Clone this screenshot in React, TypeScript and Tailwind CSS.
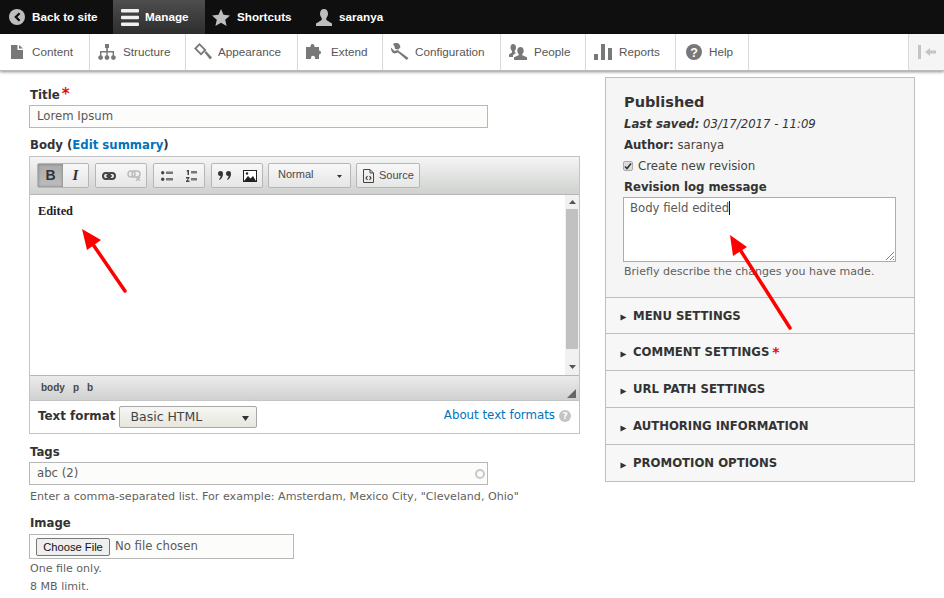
import React from "react";

const G = "#787878";
function Ic({ children, w = 18, h = 18, className = "" }: { children: React.ReactNode; w?: number; h?: number; className?: string }) {
  return <svg width={w} height={h} viewBox={`0 0 ${w} ${h}`} className={`shrink-0 ${className}`}>{children}</svg>;
}

const tray: { label: string; w: string; gap: string; icon: React.ReactNode }[] = [
  { label: "Content", w: "w-[90px]", gap: "pl-[11px] gap-[9px]", icon: <Ic w={12} h={14}><path d="M0 0h6.5v5h5.5v9H0z M8 0l4 3.6H8z" fill={G} /></Ic> },
  { label: "Structure", w: "w-[96px]", gap: "pl-[8px] gap-[7px]", icon: <Ic w={18} h={16}><path d="M7 0h4v4H9.8v3H16v5h-1.4V8.4H9.7V12H8.3V8.4H3.4V12H2V7h6.2V4H7z" fill={G} /><circle cx="2.6" cy="13.6" r="2.4" fill={G} /><circle cx="9" cy="13.6" r="2.4" fill={G} /><circle cx="15.4" cy="13.6" r="2.4" fill={G} /></Ic> },
  { label: "Appearance", w: "w-[112px]", gap: "pl-[8px] gap-[6px]", icon: <Ic w={18} h={17}><path d="M0 5.500L5.500 0l7 7L7 12.500z M2.600 5.500L5.500 2.600l4.400 4.400L7 9.900z" fill={G} fillRule="evenodd" /><path d="M10.500 9.500l1.500-1.500 6 6.500-2 2z" fill={G} /></Ic> },
  { label: "Extend", w: "w-[85px]", gap: "pl-[8px] gap-[7px]", icon: <Ic w={18} h={16}><path d="M0 3h4.500V2a2 2 0 0 1 4 0v1H13v3.500a2 2 0 1 1 0 4V15H9v-1.200a2 2 0 0 0-4 0V15H0z" fill={G} /></Ic> },
  { label: "Configuration", w: "w-[118px]", gap: "pl-[8px] gap-[6px]", icon: <Ic w={18} h={17}><path d="M0 4.500L3.500 8l3-1L17.500 15l-1.800 2L7 9.500 3.500 10.500C1 10 -.3 7 0 4.500zM2 1C3.500 -.2 7 -.3 8.500 1.500L9.500 4 7.500 6.500 4 6l-.5-2.500z" fill={G} /></Ic> },
  { label: "People", w: "w-[85px]", gap: "pl-[8px] gap-[7px]", icon: <Ic w={18} h={16}><path d="M4 0c1.800 0 3 1.300 3 3.500 0 1.500-.6 2.600-1.300 3.300v1.200L7 9 4 11v2H0v-2.500l3-2V6.800C2.200 6 1.500 5 1.500 3.500 1.500 1.300 2.500 0 4 0z" fill={G} /><path d="M11.500 3c2 0 3.200 1.500 3.200 3.700 0 1.500-.7 2.700-1.400 3.400v1.200l4.700 2V16H5v-2.700l4.700-2v-1.200C9 9.400 8.300 8.200 8.300 6.700 8.300 4.500 9.500 3 11.500 3z" fill={G} /></Ic> },
  { label: "Reports", w: "w-[90px]", gap: "pl-[8px] gap-[7px]", icon: <Ic w={18} h={16}><path d="M0 10h4v6H0zM7 0h4v16H7zM14 4h4v12h-4z" fill={G} /></Ic> },
  { label: "Help", w: "w-[73px]", gap: "pl-[10px] gap-[7px]", icon: <Ic w={16} h={16}><circle cx="8" cy="8" r="8" fill={G} /><text x="8" y="12.500" textAnchor="middle" fontFamily="Liberation Sans" fontWeight="700" fontSize="12.500" fill="#fff">?</text></Ic> },
];

function TBtn({ children, active = false }: { children: React.ReactNode; active?: boolean }) {
  return <span className={`h-full w-[25px] flex items-center justify-center ${active ? "bg-gradient-to-b from-[#aaa] to-[#bdbdbd] shadow-[inset_0_0_3px_#777]" : ""}`}>{children}</span>;
}
function TGroup({ children }: { children: React.ReactNode }) {
  return <div className="h-[25px] flex border border-[#b6b6b6] rounded-[2px] bg-gradient-to-b from-[#f8f8f8] to-[#e6e6e6] overflow-hidden">{children}</div>;
}

function Accordion({ label, star = false, h = "h-[37px]" }: { label: string; star?: boolean; h?: string }) {
  return (
    <div className={`${h} border-t border-[#bebebe] bg-[#f7f7f7] flex items-center pl-[14px] pt-[2px]`}>
      <svg width="7" height="7" viewBox="0 0 7 7" className="mr-[6px] mt-[2px]"><path d="M0.500 0.500L6.500 3.500L0.500 6.500z" fill="#333" /></svg>
      <span className="text-[11.700px] leading-none font-bold text-[#333]">{label}</span>
      {star && <span className="text-[#e00c0c] text-[14px] leading-none font-bold ml-[3px] -mt-[3px]">*</span>}
    </div>
  );
}

export default function App() {
  return (
    <div className="relative w-[944px] h-[598px] overflow-hidden bg-white text-[#333] font-['DejaVu_Sans',sans-serif] text-[11.700px]">
      {/* top bar */}
      <header className="h-[34px] bg-[#0f0f0f] flex text-white font-['Liberation_Sans',sans-serif] font-bold text-[11.700px]">
        <a className="w-[113px] flex items-center pl-[9px] gap-[7px]">
          <Ic w={16} h={16}><circle cx="8" cy="8" r="8" fill="#bebebe" /><path d="M9.800 3.400L5.200 8l4.600 4.600 1.600-1.600L8.400 8l3-3z" fill="#0f0f0f" /></Ic>
          Back to site
        </a>
        <a className="w-[92px] flex items-center pl-[8px] gap-[6px] bg-gradient-to-b from-[#4e4e4e] to-[#2e2e2e]">
          <Ic w={18} h={17}><rect x="0" y="0" width="18" height="3.600" rx="1" fill="#f0f0f0" /><rect x="0" y="6.700" width="18" height="3.600" rx="1" fill="#f0f0f0" /><rect x="0" y="13.400" width="18" height="3.600" rx="1" fill="#f0f0f0" /></Ic>
          Manage
        </a>
        <a className="w-[106px] flex items-center pl-[7px] gap-[7px]">
          <Ic w={18} h={17}><path d="M9 0l2.500 5.800L18 6.400l-4.800 4.300L14.600 17 9 13.700 3.400 17l1.400-6.300L0 6.400l6.500-.6z" fill="#bebebe" /></Ic>
          Shortcuts
        </a>
        <a className="flex items-center pl-[4px] gap-[6px]">
          <Ic w={18} h={17}><path d="M9 0c2.500 0 4 2 4 4.800 0 2-1 3.500-1.700 4.300V11l5.700 3.500V17H1v-2.500L6.700 11V9.100C6 8.300 5 6.800 5 4.800 5 2 6.500 0 9 0z" fill="#bebebe" /></Ic>
          saranya
        </a>
      </header>

      {/* tray */}
      <nav className="h-[37px] bg-white flex shadow-[0_1px_3px_rgba(0,0,0,0.45)] border-b border-[#bbb] font-['Liberation_Sans',sans-serif] text-[11.700px] text-[#565656]">
        {tray.map((t) => (
          <a key={t.label} className={`${t.w} flex items-center ${t.gap} border-r border-[#d9d9d9] pb-[1px]`}>
            {t.icon}
            <span>{t.label}</span>
          </a>
        ))}
        <div className="flex-1" />
        <div className="w-[36px] bg-[#f5f5f5] border-l border-[#d9d9d9] flex items-center justify-center">
          <Ic w={18} h={14}><path d="M0 0h3v14H0zM7 7l5-4v2.500h6v3h-6V11z" fill="#c4c4c4" /></Ic>
        </div>
      </nav>

      {/* content */}
      <main className="flex gap-[25px] pl-[29px]">
        <section className="w-[551px] pt-[16px]">
          <label className="block h-[15px] pl-[1px] font-bold text-[11.800px] leading-[15px] text-[#333]">Title<span className="text-[#e00c0c] text-[15px] leading-none ml-[2px]">*</span></label>
          <div className="mt-[3px] w-[459px] h-[23px] border border-[#b8b8b8] bg-[#fcfcfa] px-[7px] text-[11.700px] leading-[20px] text-[#595959]">Lorem Ipsum</div>

          <label className="block mt-[9px] pl-[1px] font-bold text-[11.700px] leading-[16px] text-[#333]">Body (<span className="text-[#0074bd]">Edit summary</span>)</label>
          <div className="mt-[3px] border border-[#c4c4c4]">
            <div className="h-[38px] bg-gradient-to-b from-[#f5f5f5] to-[#cfd1cf] border-b border-[#b6b6b6] flex items-center pl-[7px] gap-[6px]">
              <TGroup>
                <TBtn active><span className="font-['Liberation_Sans',sans-serif] font-bold text-[14px] text-[#333]">B</span></TBtn>
                <TBtn><span className="font-['Liberation_Serif',serif] italic font-bold text-[15px] text-[#333]">I</span></TBtn>
              </TGroup>
              <TGroup>
                <TBtn><Ic w={14} h={8}><rect x="1" y="1" width="7" height="6" rx="3" fill="none" stroke="#444" strokeWidth="2" /><rect x="6" y="1" width="7" height="6" rx="3" fill="none" stroke="#444" strokeWidth="2" /><path d="M4 4h6" stroke="#444" strokeWidth="1.500" /></Ic></TBtn>
                <TBtn><Ic w={14} h={11}><rect x="1" y="1" width="7" height="6" rx="3" fill="none" stroke="#bbb" strokeWidth="1.500" /><rect x="5" y="1" width="8" height="6" rx="3" fill="none" stroke="#bbb" strokeWidth="1.500" /><path d="M9 7l4 4M13 7l-4 4" stroke="#bbb" strokeWidth="1.300" /></Ic></TBtn>
              </TGroup>
              <TGroup>
                <TBtn><Ic w={12} h={10}><circle cx="1.700" cy="1.700" r="1.700" fill="#444" /><circle cx="1.700" cy="8.300" r="1.700" fill="#444" /><path d="M5 .500h7v2.500H5zM5 7h7v2.500H5z" fill="#777" /></Ic></TBtn>
                <TBtn><Ic w={11} h={12}><path d="M1 0h2v5H1.500V1.500H.500zM0 7h3.500v1l-2 2.500h2V12H0v-1l2-2.500H0z" fill="#444" /><path d="M5 1h6v2.500H5zM5 8h6v2.500H5z" fill="#777" /></Ic></TBtn>
              </TGroup>
              <TGroup>
                <TBtn><Ic w={13} h={9}><path d="M0 2.500a2.500 2.500 0 1 1 5 0C5 5.500 3.500 8 1.500 9L1 8c1-.7 1.500-1.500 1.500-3A2.500 2.500 0 0 1 0 2.500zM8 2.500a2.500 2.500 0 1 1 5 0c0 3-1.500 5.500-3.500 6.500L9 8c1-.7 1.500-1.500 1.500-3A2.500 2.500 0 0 1 8 2.500z" fill="#333" /></Ic></TBtn>
                <TBtn><Ic w={14} h={12}><rect x=".5" y=".5" width="13" height="11" fill="#fff" stroke="#222" /><path d="M1 11l4-5 2.500 2.500L10 6l3 5z" fill="#222" /><circle cx="4" cy="3.500" r="1.200" fill="#222" /></Ic></TBtn>
              </TGroup>
              <div className="w-[83px] h-[25px] -ml-[1px] border border-[#b6b6b6] rounded-[2px] bg-gradient-to-b from-[#f8f8f8] to-[#e6e6e6] flex items-center pl-[9px] font-['Liberation_Sans',sans-serif] text-[11px] text-[#484848] relative pb-[2px]">
                Normal
                <svg width="5" height="3" viewBox="0 0 5 3" className="absolute right-[8px] top-[11px]"><path d="M0 0h5L2.500 3z" fill="#333" /></svg>
              </div>
              <div className="h-[25px] w-[64px] border border-[#b6b6b6] -ml-[1px] rounded-[2px] bg-gradient-to-b from-[#f8f8f8] to-[#e6e6e6] flex items-center pl-[6px] gap-[5px] font-['Liberation_Sans',sans-serif] text-[11px] text-[#484848]">
                <Ic w={11} h={14}><path d="M.5.500h6.500l3.500 3.500v9.500h-10zM7 .500V4h3.500" fill="none" stroke="#444" /><path d="M4.500 7L3 9l1.500 2M6.500 7L8 9l-1.500 2" fill="none" stroke="#333" strokeWidth="1.100" /></Ic>
                Source
              </div>
            </div>
            <div className="h-[180px] bg-white flex">
              <div className="flex-1 pl-[8px] pt-[8px] font-['Liberation_Serif',serif] font-bold text-[12.350px] leading-[16px] text-[#222]">Edited</div>
              <div className="w-[14px] bg-[#f1f1f1] flex flex-col items-center">
                <svg width="7" height="4" viewBox="0 0 7 4" className="mt-[5px]"><path d="M0 4h7L3.500 0z" fill="#555" /></svg>
                <div className="w-[12px] h-[140px] mt-[5px] bg-[#c1c1c1]" />
                <div className="flex-1" />
                <svg width="7" height="4" viewBox="0 0 7 4" className="mb-[6px]"><path d="M0 0h7L3.500 4z" fill="#555" /></svg>
              </div>
            </div>
            <div className="relative h-[25px] bg-gradient-to-b from-[#ebebeb] to-[#cfd1cf] border-t border-[#b6b6b6] flex items-center pl-[11px] gap-[8px] font-['Liberation_Sans',sans-serif] font-bold text-[10px] text-[#484848] pb-[1px]">
              <span>body</span><span>p</span><span>b</span>
              <svg width="9" height="9" viewBox="0 0 9 9" className="absolute right-[3px] bottom-[2px]"><path d="M9 0v9H0z" fill="#666" /></svg>
            </div>
            <div className="h-[33px] border-t border-[#c4c4c4] flex items-center pl-[8px] pr-[8px]">
              <span className="font-bold text-[11.900px] text-[#333] mr-[4px] -mt-[1px]">Text format</span>
              <div className="relative w-[138px] h-[22px] border border-[#a8a8a8] rounded-[2px] bg-gradient-to-b from-[#f6f6f3] to-[#e7e7df] pl-[10px] text-[12.500px] leading-[20px] text-[#444]">
                Basic HTML
                <svg width="7" height="5" viewBox="0 0 7 5" className="absolute right-[7px] top-[9px]"><path d="M0 0h7L3.500 5z" fill="#333" /></svg>
              </div>
              <div className="flex-1" />
              <a className="text-[#0074bd] text-[11.800px] -mt-[3px]">About text formats</a>
              <span className="w-[12px] h-[12px] rounded-full bg-[#c4c4c4] text-white text-[9px] font-bold leading-[12px] text-center ml-[4px] -mt-[3px]">?</span>
            </div>
          </div>

          <label className="block mt-[11px] pl-[1px] font-bold text-[11.700px] leading-[15px] text-[#333]">Tags</label>
          <div className="relative mt-[2px] w-[459px] h-[23px] border border-[#b8b8b8] bg-[#fcfcfa] px-[7px] text-[11.700px] leading-[20px] text-[#595959]">
            abc (2)
            <span className="absolute right-[2px] top-[6px] w-[10px] h-[10px] rounded-full border-2 border-[#c8c8c8]" />
          </div>
          <p className="mt-[5px] pl-[1px] text-[11.120px] leading-[14px] text-[#5f5f5f]">Enter a comma-separated list. For example: Amsterdam, Mexico City, "Cleveland, Ohio"</p>

          <label className="block mt-[12px] pl-[1px] font-bold text-[11.700px] leading-[15px] text-[#333]">Image</label>
          <div className="mt-[3px] w-[265px] h-[25px] border border-[#b8b8b8] bg-[#fcfcfa] flex items-center pl-[6px] gap-[5px]">
            <span className="h-[18px] w-[74px] border border-[#777] rounded-[2px] bg-[#efefef] font-['Liberation_Sans',sans-serif] text-[11.200px] leading-[16px] text-center text-[#111]">Choose File</span>
            <span className="text-[11.700px] text-[#595959] mt-[1px]">No file chosen</span>
          </div>
          <p className="mt-[1px] pl-[1px] text-[11.050px] leading-[18px] text-[#5f5f5f]">One file only.</p>
          <p className="pl-[1px] text-[11.050px] leading-[18px] text-[#5f5f5f]">8 MB limit.</p>
        </section>

        <aside className="w-[310px] mt-[6px] h-[405px] border border-[#bebebe] bg-[#f5f5f5] flex flex-col">
          <div className="h-[219px] pl-[18px] pt-[16px]">
            <h3 className="font-bold text-[14.500px] leading-[17px] text-[#333]">Published</h3>
            <p className="mt-[5px] text-[11.700px] leading-[16px] italic text-[#333]"><b>Last saved:</b> 03/17/2017 - 11:09</p>
            <p className="mt-[5px] text-[11.700px] leading-[16px] text-[#444]"><b className="text-[#333]">Author:</b> saranya</p>
            <div className="mt-[5px] -ml-[1px] flex items-center gap-[5px] text-[11.800px] leading-[16px] text-[#444]">
              <span className="w-[10px] h-[10px] rounded-[2px] border border-[#aaa] bg-[#ddd] flex items-center justify-center">
                <svg width="8" height="8" viewBox="0 0 8 8"><path d="M1 4.500l2 2 4-5" fill="none" stroke="#333" strokeWidth="1.600" /></svg>
              </span>
              Create new revision
            </div>
            <p className="mt-[5px] font-bold text-[11.700px] leading-[16px] text-[#333]">Revision log message</p>
            <div className="relative mt-[2px] -ml-[1px] w-[273px] h-[65px] border border-[#8fb3d0] bg-white px-[6px] pt-[2px] text-[11.700px] leading-[16px] text-[#595959]">
              <span className="border-r border-[#111]">Body field edited</span>
              <svg width="8" height="8" viewBox="0 0 8 8" className="absolute right-[1px] bottom-[1px]"><path d="M8 0L0 8M8 4L4 8M8 7L7 8" stroke="#666" strokeWidth="0.800" /></svg>
            </div>
            <p className="mt-[3px] text-[11.050px] leading-[14px] text-[#5f5f5f]">Briefly describe the changes you have made.</p>
          </div>
          <Accordion label="MENU SETTINGS" h="h-[36px]" />
          <Accordion label="COMMENT SETTINGS" star />
          <Accordion label="URL PATH SETTINGS" />
          <Accordion label="AUTHORING INFORMATION" />
          <Accordion label="PROMOTION OPTIONS" />
        </aside>
      </main>

      {/* annotation arrows */}
      <svg width="944" height="598" viewBox="0 0 944 598" className="absolute left-0 top-0 pointer-events-none">
        <path d="M125 291L92 243" stroke="#f00" strokeWidth="3.500" strokeLinecap="round" />
        <path d="M82 229L101 240L87 250z" fill="#f00" />
        <path d="M790 328L739 248" stroke="#f00" strokeWidth="3.500" strokeLinecap="round" />
        <path d="M730 235L747 247L733 256z" fill="#f00" />
      </svg>
    </div>
  );
}
